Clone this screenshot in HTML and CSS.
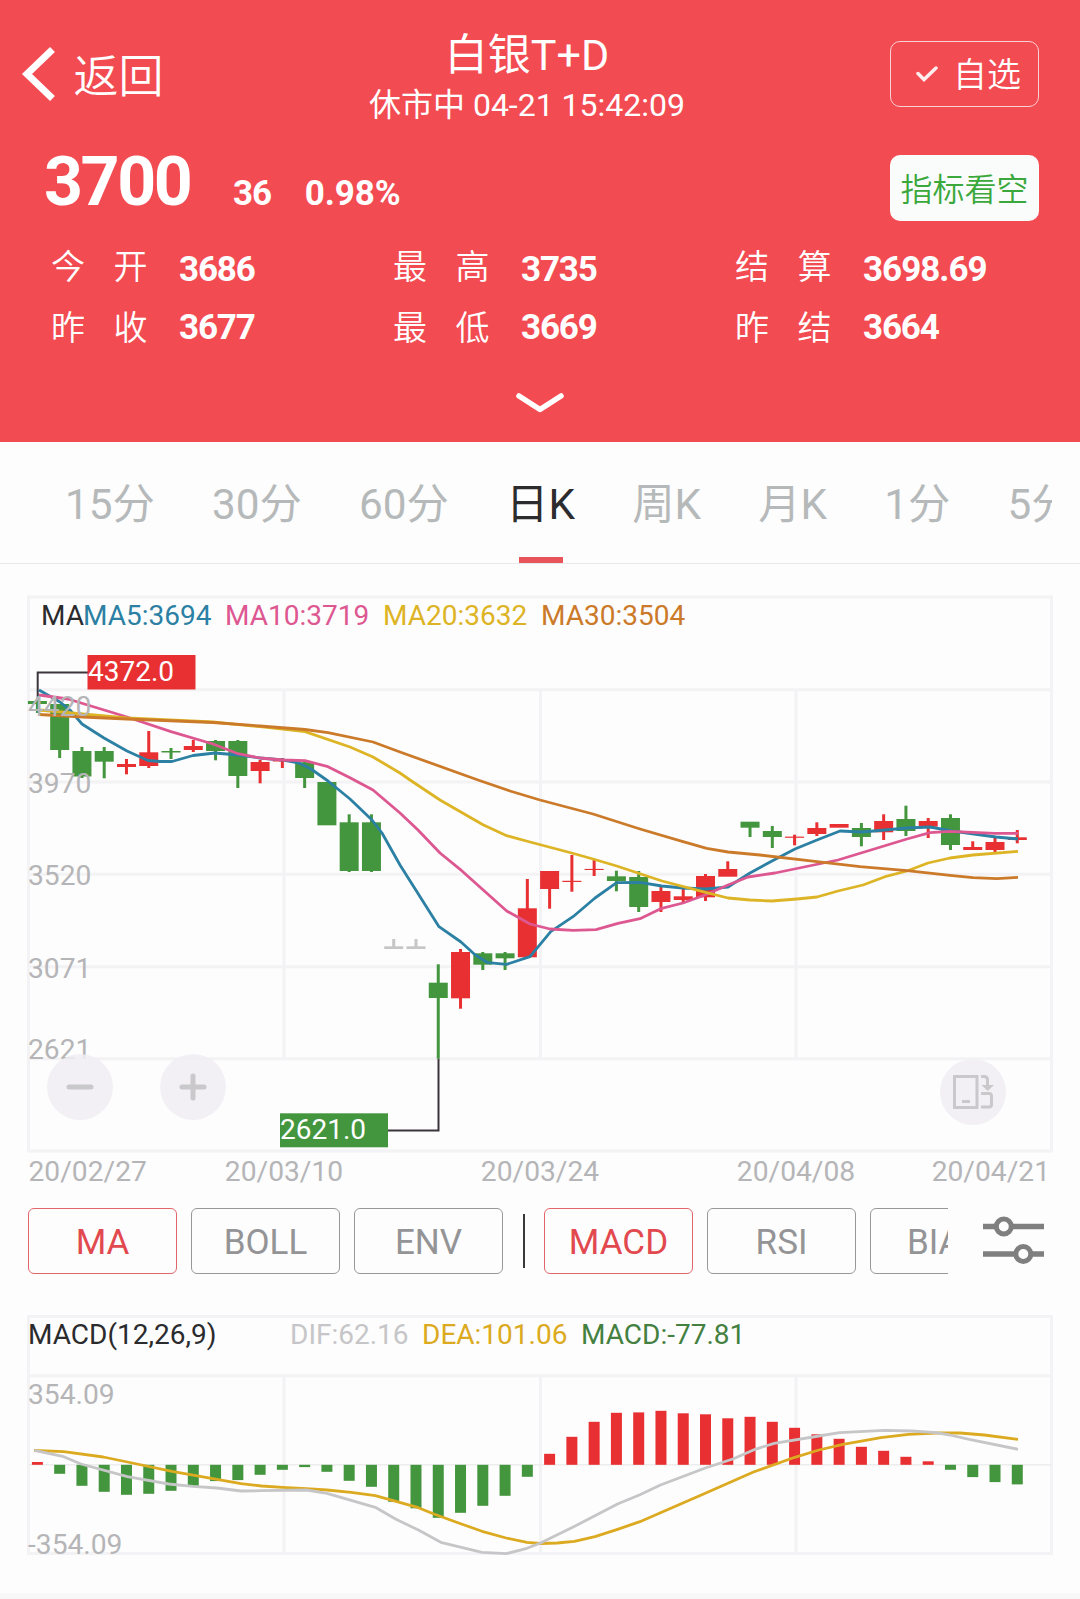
FILE: index.html
```html
<!DOCTYPE html>
<html lang="zh-CN">
<head>
<meta charset="utf-8">
<title>白银T+D</title>
<link rel="stylesheet" href="styles.css">
</head>
<body>
<header class="quote">
  <div class="topbar">
    <a class="back"><svg width="36" height="58" viewBox="0 0 36 58"><path d="M32.500 4.500 7 29l25.500 24.500"/></svg><span>返回</span></a>
    <div class="heading">
      <h1>白银T+D</h1>
      <p>休市中 04-21 15:42:09</p>
    </div>
    <div class="actions">
      <button class="fav"><svg width="22" height="16" viewBox="0 0 22 16"><path d="M2 7.500 8 13.500 20 2"/></svg><span>自选</span></button>
      <button class="signal"><span>指标看空</span></button>
    </div>
  </div>
  <div class="price"><strong>3700</strong><b class="change">36</b><b>0.98%</b></div>
  <dl class="stats">
    <div><dt><i>今</i><i>开</i></dt><dd>3686</dd></div>
    <div><dt><i>最</i><i>高</i></dt><dd>3735</dd></div>
    <div><dt><i>结</i><i>算</i></dt><dd>3698.69</dd></div>
    <div><dt><i>昨</i><i>收</i></dt><dd>3677</dd></div>
    <div><dt><i>最</i><i>低</i></dt><dd>3669</dd></div>
    <div><dt><i>昨</i><i>结</i></dt><dd>3664</dd></div>
  </dl>
  <svg class="expand" width="50" height="22" viewBox="0 0 50 22"><path d="M4 4 25 17.500 46 4"/></svg>
</header>

<nav class="tabs">
  <div class="tabs-scroll">
    <a>15分</a><a>30分</a><a>60分</a><a class="on">日K</a><a>周K</a><a>月K</a><a>1分</a><a>5分</a>
  </div>
</nav>

<section class="chart main">
  <svg width="1080" height="620" viewBox="0 580 1080 620">
    <g class="grid">
      <path d="M28.500 597H1051.500V1151H28.500ZM28.500 689.800H1051.500M28.500 782H1051.500M28.500 874.300H1051.500M28.500 966.800H1051.500M28.500 1058.800H1051.500M284 690V1059M540.500 690V1059M796 690V1059"/>
    </g>
    <g id="candles"></g>
    <g id="ma"></g>
    <g class="callout">
      <path d="M37.700 700V672.500H88M388 1130.500H438.500V1058.700"/>
      <rect x="87.500" y="655" width="108" height="34.500" class="up"/>
      <rect x="280" y="1113.300" width="108" height="34" class="down"/>
      <text x="88" y="681">4372.0</text>
      <text x="280" y="1139">2621.0</text>
    </g>
    <g class="axis">
      <text x="28" y="716">4420</text>
      <text x="28" y="792.500">3970</text>
      <text x="28" y="884.500">3520</text>
      <text x="28" y="978">3071</text>
      <text x="28" y="1059">2621</text>
      <text x="28.500" y="1181">20/02/27</text>
      <text x="284" y="1181" text-anchor="middle">20/03/10</text>
      <text x="540" y="1181" text-anchor="middle">20/03/24</text>
      <text x="796" y="1181" text-anchor="middle">20/04/08</text>
      <text x="1050" y="1181" text-anchor="end">20/04/21</text>
    </g>
    <g class="legend">
      <text x="41" y="625" class="c-ink">MA</text>
      <text x="83" y="625" class="c-ma5">MA5:3694</text>
      <text x="225" y="625" class="c-ma10">MA10:3719</text>
      <text x="383" y="625" class="c-ma20">MA20:3632</text>
      <text x="541" y="625" class="c-ma30">MA30:3504</text>
    </g>
  </svg>
  <button class="round zoom-out"><svg viewBox="0 0 66 66"><path d="M22 33H44"/></svg></button>
  <button class="round zoom-in"><svg viewBox="0 0 66 66"><path d="M22 33H44M33 22V44"/></svg></button>
  <button class="round rotate"><svg viewBox="0 0 66 66"><path class="thin" d="M14.500 17.500H37V48.500H14.500ZM22 42.500H30M41 17.500H44Q47.500 17.500 47.500 21V26M41 34.500H49Q51.500 34.500 51.500 37V45.500Q51.500 48 49 48H41"/><path class="tip" d="M41.500 26H54L47.700 32Z"/></svg></button>
</section>

<section class="indicators">
  <div class="chips">
    <a class="on">MA</a><a>BOLL</a><a>ENV</a><i class="divider"></i><a class="on">MACD</a><a>RSI</a><a>BIAS</a>
  </div>
  <svg class="settings" width="64" height="52" viewBox="0 0 64 52"><path d="M2 12.500H63M2 40H63"/><circle cx="22.800" cy="12.500" r="7.500"/><circle cx="42.300" cy="40" r="7.500"/></svg>
</section>

<section class="chart macd">
  <svg width="1080" height="290" viewBox="0 1303 1080 290">
    <g class="grid">
      <path d="M28.500 1316.500H1051.500V1553.500H28.500ZM28.500 1375.700H1051.500M284 1376V1553M540.500 1376V1553M796 1376V1553"/>
      <path class="zero" d="M28.500 1464.800H1051.500"/>
    </g>
    <g class="axis">
      <text x="28" y="1404">354.09</text>
      <text x="28" y="1553.500">-354.09</text>
    </g>
    <g id="bars"></g>
    <g id="macd-lines"></g>
    <g class="legend">
      <text x="28" y="1344" class="c-ink">MACD(12,26,9)</text>
      <text x="290" y="1344" class="c-dif">DIF:62.16</text>
      <text x="422" y="1344" class="c-dea">DEA:101.06</text>
      <text x="581" y="1344" class="c-macd">MACD:-77.81</text>
    </g>
  </svg>
</section>
<footer></footer>
<script src="chart.js"></script>
</body>
</html>
```
FILE: styles.css
```css
* { box-sizing: border-box; }
body {
  margin: 0;
  width: 1080px;
  height: 1599px;
  overflow: hidden;
  display: flex;
  flex-direction: column;
  background: #fdfdfd;
  font-family: Roboto, "Noto Sans CJK SC", sans-serif;
}
h1, p, dl, dd { margin: 0; font-weight: 400; }
i { font-style: normal; }
button { font: inherit; padding: 0; border: 0; cursor: pointer; }
svg { display: block; fill: none; }

.quote {
  height: 442px;
  flex: none;
  background: #f34b52;
  color: #fff;
}
.topbar {
  height: 148px;
  padding: 0 41px 0 20px;
  display: grid;
  grid-template-columns: 265px 1fr 268px;
}
.back {
  display: flex;
  align-items: center;
  height: 148px;
  gap: 17.500px;
  font-size: 45px;
}
.back span { font-weight: 350; padding-bottom: 1px; }
.back svg { stroke: #fff; stroke-width: 7; }
.heading { text-align: center; padding: 28px 0 0; margin: 0 -19px 0 -21px; white-space: nowrap; }
.heading h1 { font-size: 43px; line-height: 54px; }
.heading p { font-size: 32px; line-height: 46px; }
.actions {
  display: flex;
  flex-direction: column;
  align-items: flex-end;
  gap: 48px;
  padding-top: 41px;
}
.actions button {
  width: 149px;
  height: 66px;
  flex: none;
  border-radius: 10px;
  display: flex;
  align-items: center;
  justify-content: center;
}
.actions span { padding-bottom: 3px; font-weight: 350; }
.fav {
  border: 1.500px solid #fbd0d2;
  background: none;
  color: #fff;
  font-size: 34px;
  gap: 15px;
}
.actions .fav { justify-content: flex-end; padding-right: 17px; }
.fav svg { stroke: #fff; stroke-width: 3.500; stroke-linecap: round; opacity: .9; }
.signal { background: #fafcfb; color: #3ba83c; font-size: 32px; }

.price {
  display: flex;
  align-items: baseline;
  width: 600px;
  height: 96px;
  padding: 1px 0 0 44px;
  line-height: 68px;
}
.price strong { font-size: 68px; letter-spacing: -2.400px; width: 189px; line-height: 66px; }
.price b { font-size: 35px; letter-spacing: -.100px; }
.price .change { letter-spacing: -1.200px; margin-right: 34px; }

.stats {
  display: grid;
  grid-template-columns: repeat(3, 342px);
  grid-auto-rows: 60px;
  padding-left: 51px;
  height: 142px;
  margin-top: -8px;
}
.stats div { display: flex; align-items: center; }
.stats dt { display: flex; gap: 28.500px; width: 128px; font-size: 34px; font-weight: 350; padding-bottom: 2px; }
.stats dd { font-size: 35px; font-weight: 700; letter-spacing: -1.200px; padding-top: 3px; }
.stats div:nth-child(-n+3) dt { padding-bottom: 4px; }
.stats div:nth-child(-n+3) dd { padding-top: 7px; }
.stats div:nth-child(3) dd { letter-spacing: -1px; }
.expand { margin: 14px auto 0; stroke: #fff; stroke-width: 5.500; stroke-linecap: round; stroke-linejoin: round; }

.tabs { height: 122px; flex: none; border-bottom: 1.500px solid #e9e9eb; padding: 0 28px 0 65px; }
.tabs-scroll { display: flex; gap: 57.200px; overflow: hidden; height: 121px; font-size: 42.300px; color: #b6b9ba; white-space: nowrap; }
.tabs a { line-height: 125px; height: 121px; flex: none; display: flex; flex-direction: column; align-items: center; }
.tabs .on { color: #2c2c2e; }
.tabs .on::after { content: ""; width: 44px; height: 6px; background: #e9545b; margin-top: -10px; }

.chart { position: relative; flex: none; }
.main { height: 620px; margin-top: 16px; }
.macd { height: 290px; }
.grid path { stroke: #f3f2f4; stroke-width: 3; }
.grid .zero { stroke: #ededed; stroke-width: 1.500; }
text { font-size: 28px; fill: currentColor; white-space: pre; }
.axis { color: #b5b5b8; }
.axis text { font-size: 28.200px; }
.callout path { stroke: #3c363c; stroke-width: 2; }
.callout text { fill: #fff; }
.up { fill: #e83032; }
.down { fill: #44963e; }
.flat { fill: #c6c6c6; }
.c-ink { color: #2b2b2e; }
.c-ma5 { color: #2b80a3; }
.c-ma10 { color: #dd5791; }
.c-ma20 { color: #ddb425; }
.c-ma30 { color: #cb7a2a; }
.c-dif { color: #c6c6c8; }
.c-dea { color: #dcaa20; }
.c-macd { color: #44803f; }
.line { stroke: currentColor; stroke-width: 2.800; stroke-linejoin: round; }

.round {
  position: absolute;
  width: 66px;
  height: 66px;
  border-radius: 50%;
  background: rgba(240, 238, 242, .88);
}
.round path { stroke: #c9c8cb; stroke-width: 5; stroke-linecap: round; }
.round .thin { stroke-width: 3; stroke-linecap: butt; }
.round .tip { fill: #c9c8cb; stroke: none; }
.zoom-out { left: 47px; top: 474px; }
.zoom-in { left: 160px; top: 474px; }
.rotate { left: 940px; top: 479px; }

.indicators { height: 103px; flex: none; display: flex; padding: 8px 35px 0 28px; }
.chips { display: flex; width: 920px; gap: 14px; overflow: hidden; }
.chips a {
  width: 149px;
  height: 66px;
  flex: none;
  border: 1.500px solid #98989a;
  border-radius: 6px;
  color: #949496;
  font-size: 35px;
  line-height: 67px;
  text-align: center;
}
.chips .on { border-color: #e0666c; color: #e2494f; }
.divider { width: 1.500px; height: 54px; margin: 6px 5.500px 0 6px; background: #39393b; flex: none; }
.settings { margin: 6px 0 0 auto; stroke: #7f7f7f; stroke-width: 5.500; }
.settings circle { fill: #fdfdfd; stroke-width: 5; }

footer { flex: 1; background: #f8f8f8; }
```
FILE: chart.js
```javascript
const NS = 'http://www.w3.org/2000/svg';
const X0 = 37.4, STEP = 22.27;

function add(parent, tag, attrs) {
  const el = document.createElementNS(NS, tag);
  for (const k in attrs) el.setAttribute(k, attrs[k]);
  document.getElementById(parent).appendChild(el);
}

// kind, body top, body bottom, wick top, wick bottom
const candles = [
  ['down',701,704,699,713],['down',704,750,704,758],['down',751,776.5,747,778],['down',751,761.7,747,778.3],
  ['up',764,767,759,774.3],['up',752.3,766,731,768],['down',751,752.5,748,759],['up',746,750,740,752],
  ['down',741,751,740,760.3],['down',741,776,740,788],['up',762,771,760,783.3],['up',760,761.5,758,768],
  ['down',762.3,778,761,788],['down',782,825.3,782,825],['down',822.3,871,814.3,872],['down',822.3,871,814.3,872],
  ['flat',946.3,949,939,947],['flat',946.3,949,939,947],['down',982.7,998,964.3,1058.7],['up',952,998.3,949,1008.7],
  ['down',953.3,964.7,952,970],['down',953.3,958.3,952,970],['up',908.3,957.3,879,957],['up',871,889,871,908.7],
  ['up',880.8,882,855,891.7],['up',868.9,870,859,876],['down',876.3,881,870.7,891.3],['down',877,907,871,912],
  ['up',891,902,886.7,912],['up',896.3,900,889,903],['up',876,897.3,874,901],['up',869,876.7,861.3,876],
  ['down',821.7,827.7,822,837],['down',831,837,826,848],['up',836.6,837.8,834.7,845.3],['up',828,834,822.3,836],
  ['up',824,827.7,824,827],['down',828,837,823,846.3],['up',821,832.3,814.3,840],['down',819,831,805.7,836],
  ['up',821,826.7,818,838],['down',818,845,814.3,850],['up',847,850,841.3,850],['up',842,850,838,852],
  ['up',837.3,840,830,843.3]
];
candles.forEach(([kind, t, b, wt, wb], i) => {
  const x = X0 + i * STEP;
  add('candles', 'rect', { x: x - 9.5, y: t, width: 19, height: b - t, class: kind });
  add('candles', 'rect', { x: x - 1.5, y: wt, width: 3, height: wb - wt, class: kind });
});

const averages = {
  'c-ma5': '39,690 60,702 70,710 82,724 104,738 127,751 148,760.500 160,761.500 172,761.500 193,755.500 215,753 238,755 260,758 283,760 299,763 311,769 328,781 350,799 372,820 382,833 400,865 439,926.700 461,942 475,954.700 488,962.700 506.700,964.300 530,956.700 550.700,931.700 573,916.700 595,898 616.700,882.700 640,882.300 661.700,886 683,888 706,889 728,887 750,873 772,861 795,849 817,840 840,831 862,832 885,830 907,828 930,827 952,831 974,834 996,837 1018,839',
  'c-ma10': '39,695 68,699 127,717 171,731.700 213,744 238,753.700 260,758 283,760 305,760.700 328,766.700 350,777.700 373,790 400,813 418,830 440,853 461.700,870.700 506.700,911 530,924 550,929 573,930.300 596,929.700 618,923.300 640,918.700 661.700,908.300 683,903 705,895 728,885 748,877 775,873 838,860 907,839 930,832.700 950,831.300 995,833.300 1018,833.300',
  'c-ma20': '39,710 83,714 127,718 213,722 260,726.700 305,731.700 350,747 373,757 400,773 410,780 440,800 483,824.700 506.700,835.700 530,842 571.700,853 593,859 616.700,866 662,881 706.700,892.700 728,898 750,900 771.700,901 797,899 817,897 838,891 863,885 885,876.700 907,871 928,863 950,858 973,855 1018,851.300',
  'c-ma30': '39,714.500 83,717 127,719 213,722.500 260,726 305,729.500 328,732.700 373,742 400,752 478,780 510,791 540,800 593,814 640,829 683,841.700 706.700,848.300 728,852 760,855 817,861.700 860,866.700 907,870.700 950,875.300 973,877.700 997,878.700 1018,877.300'
};
for (const k in averages) add('ma', 'polyline', { points: averages[k], class: 'line ' + k });

const ZERO = 1464.8;
const bars = [-2.8,9,21,27,30,29,26,21,16.3,15.3,10,5,2.3,7,16,22,37,43.5,53,48,41,31,12,
  -11,-28,-43,-52,-52.4,-54,-51.5,-50.5,-46.5,-48,-43,-37,-30.500,-26,-18,-14,-8,-3.500,5,12.300,17.300,19.600];
bars.forEach((v, i) => {
  add('bars', 'rect', {
    x: X0 + i * STEP - 5.5, y: v < 0 ? ZERO + v : ZERO,
    width: 11, height: Math.abs(v), class: v < 0 ? 'up' : 'down'
  });
});

const signals = {
  'c-dea': '34,1450.500 63.700,1451.700 103.300,1457 127.400,1462 172,1471.300 217,1479.300 241,1483.700 261.700,1486 282.400,1487.300 306.500,1488.700 327,1490 351.200,1492.300 375.300,1495.700 396,1501.300 418.400,1507.700 433.900,1514 461.400,1524 482,1531.300 506.200,1538 526.900,1542.300 540,1543.500 557.200,1543 574.400,1541.300 595,1536.700 617.500,1529.300 639.900,1521.700 660.500,1512.700 705.300,1493.300 753.500,1472 794.800,1457.300 818.900,1450 843,1444.300 880.900,1437.700 908.500,1434.300 936,1433 960,1433 984.200,1435 1018,1439.300',
  'c-dif': '34.400,1450.300 63.700,1456.700 81,1464 127.400,1476.700 168.700,1484 192.800,1486.300 217,1488 241,1491 261.700,1490.700 306.500,1490 327,1493.300 375.300,1507.300 396,1519.300 418.400,1530 440.800,1542.300 482,1552.300 506.200,1553.700 526.900,1548.300 540,1543.300 572.700,1527.300 617.500,1504 639.900,1494.700 660.500,1485 705.300,1468 732.800,1459 755.200,1449.300 774.200,1443.300 818.900,1436 839.600,1432.700 884.400,1430.300 911.900,1431 936,1432.700 949.800,1435 970.400,1439.700 1018,1449.300'
};
for (const k in signals) add('macd-lines', 'polyline', { points: signals[k], class: 'line ' + k });
```
